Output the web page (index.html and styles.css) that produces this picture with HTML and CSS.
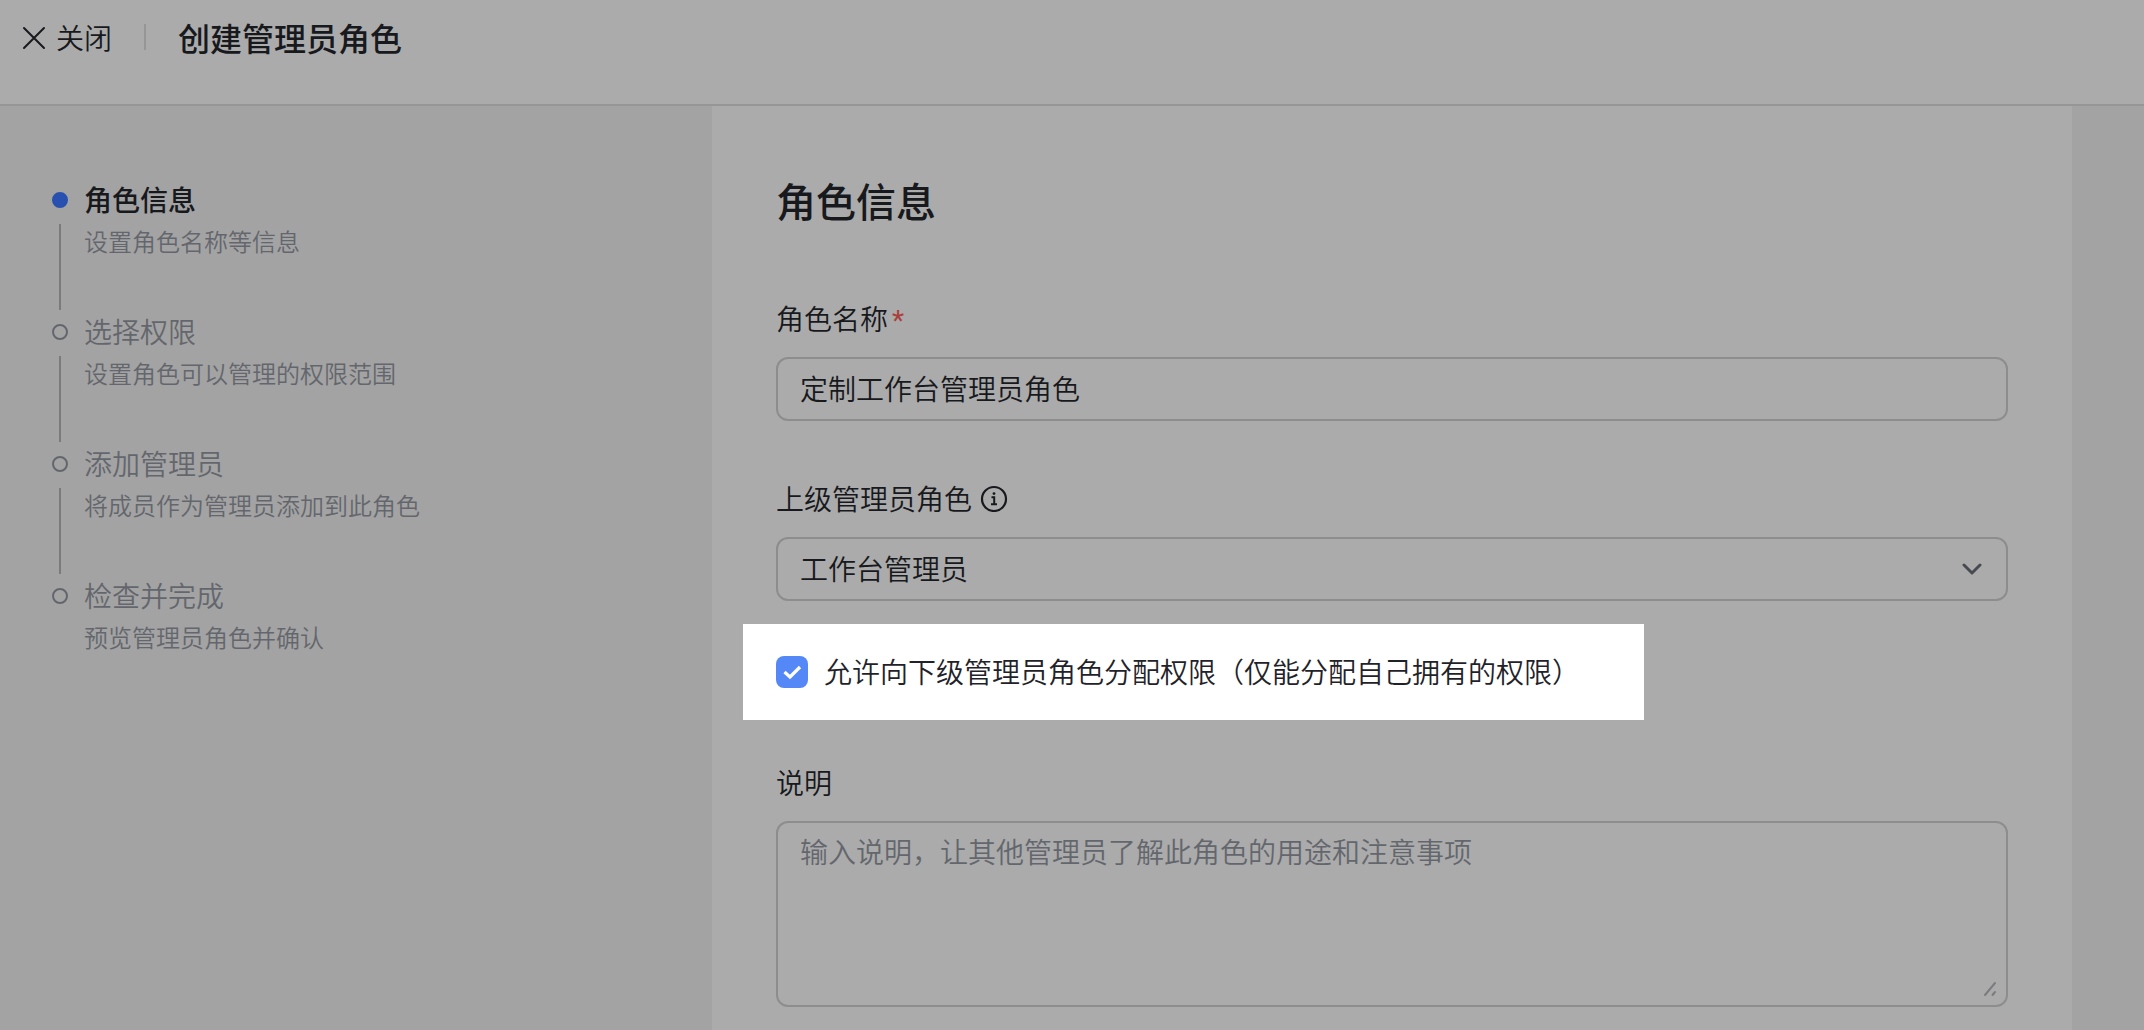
FILE: index.html
```html
<!DOCTYPE html>
<html lang="zh-CN">
<head>
<meta charset="utf-8">
<meta name="viewport" content="width=device-width, initial-scale=1">
<title>创建管理员角色</title>
<link rel="stylesheet" href="styles.css">
</head>
<body>
<header class="topbar">
  <button class="close" type="button">
    <svg class="icon" viewBox="0 0 28 28" aria-hidden="true"><path d="M4 5l20 20M24 5L4 25" stroke="currentColor" stroke-width="2" stroke-linecap="round"/></svg>
    <span>关闭</span>
  </button>
  <span class="divider"></span>
  <h1 class="page-title">创建管理员角色</h1>
</header>
<div class="layout">
  <nav class="sidebar" aria-label="创建步骤">
    <ol class="steps">
      <li class="step step-active" aria-current="step">
        <div class="rail"><span class="dot"></span><span class="line"></span></div>
        <div class="step-text"><div class="step-title">角色信息</div><div class="step-desc">设置角色名称等信息</div></div>
      </li>
      <li class="step">
        <div class="rail"><span class="dot"></span><span class="line"></span></div>
        <div class="step-text"><div class="step-title">选择权限</div><div class="step-desc">设置角色可以管理的权限范围</div></div>
      </li>
      <li class="step">
        <div class="rail"><span class="dot"></span><span class="line"></span></div>
        <div class="step-text"><div class="step-title">添加管理员</div><div class="step-desc">将成员作为管理员添加到此角色</div></div>
      </li>
      <li class="step">
        <div class="rail"><span class="dot"></span></div>
        <div class="step-text"><div class="step-title">检查并完成</div><div class="step-desc">预览管理员角色并确认</div></div>
      </li>
    </ol>
  </nav>
  <main class="panel">
    <h2 class="panel-title">角色信息</h2>
    <form class="form">
      <div class="field">
        <label class="label" for="role-name">角色名称<span class="required">*</span></label>
        <input class="control" id="role-name" type="text" value="定制工作台管理员角色" required>
      </div>
      <div class="field">
        <div class="label-row">
          <label class="label" for="parent-role">上级管理员角色</label>
          <svg class="icon" viewBox="0 0 28 28" fill="none" stroke="currentColor" aria-hidden="true"><circle cx="14" cy="15" r="12" stroke-width="2.200"/><path d="M11.500 13.300h2.700v6.700M11 20.200h6" stroke-width="2"/><circle cx="14" cy="9.600" r="1.400" fill="currentColor" stroke="none"/></svg>
        </div>
        <div class="control-wrap">
          <select class="control" id="parent-role"><option>工作台管理员</option></select>
          <svg class="chevron" viewBox="0 0 20 12" fill="none" aria-hidden="true"><path d="M2 2l8 8 8-8" stroke="currentColor" stroke-width="3" stroke-linecap="round" stroke-linejoin="round"/></svg>
        </div>
      </div>
      <label class="spotlight" for="allow-assign">
        <input class="checkbox" id="allow-assign" type="checkbox" checked>
        <span class="spotlight-text">允许向下级管理员角色分配权限（仅能分配自己拥有的权限）</span>
      </label>
      <div class="field">
        <label class="label" for="description">说明</label>
        <div class="control-wrap">
          <textarea class="control textarea" id="description" placeholder="输入说明，让其他管理员了解此角色的用途和注意事项"></textarea>
          <svg class="grip" viewBox="0 0 14 16" fill="none" aria-hidden="true"><path d="M2 14L12 2M9.500 14l2.500-3" stroke="currentColor" stroke-width="2" stroke-linecap="round"/></svg>
        </div>
      </div>
    </form>
  </main>
</div>
</body>
</html>
```

FILE: styles.css
```css
:root {
  --text: #17191d;
  --muted: #63676d;
  --surface: #ababab;
  --base: #a3a3a3;
  --border: #8d8d8d;
}

* {
  box-sizing: border-box;
}

body {
  display: flex;
  flex-direction: column;
  min-height: 100vh;
  margin: 0;
  background: var(--base);
  color: var(--text);
  font-family: "Noto Sans CJK SC", sans-serif;
  font-size: 28px;
  font-weight: 350;
  line-height: 44px;
}

button,
input,
select,
textarea {
  margin: 0;
  font: inherit;
  color: inherit;
}

.icon {
  flex: none;
  width: 28px;
  height: 28px;
}

.topbar {
  display: flex;
  align-items: center;
  gap: 32px;
  padding: 13px 20px 43px;
  border-bottom: 2px solid #969696;
  background: var(--surface);
}

.close {
  display: flex;
  align-items: center;
  gap: 8px;
  padding: 0;
  border: 0;
  background: none;
  cursor: pointer;
}

.divider {
  width: 2px;
  height: 26px;
  background: #969696;
}

.page-title {
  margin: 0;
  font-size: 32px;
  font-weight: 500;
  line-height: 48px;
}

.layout {
  display: grid;
  flex: 1;
  grid-template-columns: 712px minmax(0, 1fr);
  padding-right: 72px;
}

.sidebar {
  padding: 71px 52px;
}

.steps {
  margin: 0;
  padding: 0;
  list-style: none;
}

.step {
  display: flex;
  gap: 16px;
  min-height: 132px;
  color: var(--muted);
}

.rail {
  display: flex;
  flex-direction: column;
  align-items: center;
  gap: 16px;
  padding-top: 15px;
  margin-bottom: -1px;
}

.dot {
  width: 16px;
  height: 16px;
  border: 2px solid var(--muted);
  border-radius: 50%;
}

.line {
  flex: 1;
  width: 2px;
  background: #7b7b7c;
}

.step-desc {
  font-size: 24px;
  line-height: 40px;
}

.step-active .dot {
  border-color: #2750b0;
  background: #2750b0;
}

.step-active .step-title {
  color: var(--text);
  font-weight: 500;
}

.panel {
  padding: 66px 64px 16px;
  background: var(--surface);
}

.panel-title {
  margin: 0 0 68px;
  font-size: 40px;
  font-weight: 500;
  line-height: 56px;
}

.field {
  display: flex;
  flex-direction: column;
  gap: 17px;
}

.field + .field {
  margin-top: 55px;
}

.label-row {
  display: flex;
  align-items: center;
  gap: 8px;
}

.required {
  margin-left: 4px;
  color: #a9403c;
  font-family: Roboto, sans-serif;
  font-weight: 400;
  line-height: 1;
}

.control-wrap {
  position: relative;
  display: flex;
}

.control {
  width: 100%;
  height: 64px;
  padding: 0 22px 2px;
  border: 2px solid var(--border);
  border-radius: 12px;
  background: transparent;
  appearance: none;
}

.chevron {
  position: absolute;
  top: 26px;
  right: 26px;
  width: 20px;
  height: 12px;
  color: #474a50;
  pointer-events: none;
}

.spotlight {
  display: flex;
  align-items: center;
  gap: 16px;
  width: fit-content;
  min-height: 96px;
  margin: 23px 0 40px -33px;
  padding: 0 64px 0 33px;
  background: #fff;
  color: #1f2329;
}

.spotlight-text {
  padding-bottom: 2px;
}

.checkbox {
  flex: none;
  width: 32px;
  height: 32px;
  border-radius: 8px;
  background: #5588f7;
  appearance: none;
}

.checkbox:checked {
  background-image: url("data:image/svg+xml,%3Csvg xmlns='http://www.w3.org/2000/svg' viewBox='0 0 32 32'%3E%3Cpath d='M8.500 16l5.500 5 10-10' fill='none' stroke='white' stroke-width='3.200'/%3E%3C/svg%3E");
}

.textarea {
  height: 186px;
  padding: 6px 22px;
  resize: none;
}

.textarea::placeholder {
  color: var(--muted);
}

.grip {
  position: absolute;
  right: 11px;
  bottom: 10px;
  width: 14px;
  height: 16px;
  color: #7b7c7f;
  pointer-events: none;
}
```
